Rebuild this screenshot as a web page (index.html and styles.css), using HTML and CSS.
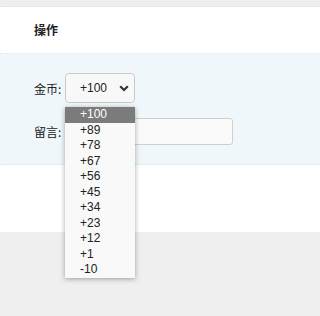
FILE: index.html
```html
<!DOCTYPE html>
<html lang="zh">
<head>
<meta charset="utf-8">
<title>操作</title>
<link rel="stylesheet" href="styles.css">
</head>
<body>
<div class="page">
  <div class="panel">
    <div class="strip"></div>
    <div class="head">操作</div>
    <div class="form">
      <div class="row">
        <span class="label">金币:</span>
        <div class="select-wrap">
          <div class="select">
            <span class="value">+100</span>
            <svg class="chev" width="10" height="7" viewBox="0 0 10 7"><path d="M1.2 1.3 L5 5 L8.8 1.3" fill="none" stroke="#333" stroke-width="2.2"/></svg>
          </div>
          <ul class="menu">
            <li class="on">+100</li>
            <li>+89</li>
            <li>+78</li>
            <li>+67</li>
            <li>+56</li>
            <li>+45</li>
            <li>+34</li>
            <li>+23</li>
            <li>+12</li>
            <li>+1</li>
            <li>-10</li>
          </ul>
        </div>
      </div>
      <div class="row">
        <span class="label">留言:</span>
        <input class="text" type="text">
      </div>
    </div>
    <div class="filler"></div>
  </div>
  <div class="rest"></div>
</div>
</body>
</html>
```

FILE: styles.css
```css
html, body {
  margin: 0;
  padding: 0;
  height: 316px;
}
body {
  background: #efefef;
  font-family: "Liberation Sans", "Noto Sans CJK SC", sans-serif;
  font-size: 12px;
  color: #222;
}
.page {
  height: 316px;
  display: flex;
  flex-direction: column;
}
.panel {
  background: #fff;
  position: relative;
  z-index: 1;
}
.rest {
  flex: 1;
  background: #efefef;
}
.strip {
  height: 6px;
  background: #eeeeee;
  border-bottom: 1px dotted #d6e4ee;
}
.head {
  height: 46px;
  line-height: 46px;
  padding-left: 34px;
  font-weight: bold;
  font-family: "Noto Sans CJK SC", sans-serif;
  color: #222;
  border-bottom: 1px dotted #d6e4ee;
}
.form {
  background: #f0f7fb;
  padding: 19px 0 19px 34px;
  display: flex;
  flex-direction: column;
  gap: 15px;
  border-bottom: 1px dotted #d6e4ee;
}
.row {
  display: flex;
  align-items: center;
}
.label {
  width: 31px;
  font-family: "Noto Sans CJK SC", sans-serif;
  color: #222;
}
.select-wrap {
  position: relative;
}
.select {
  box-sizing: border-box;
  width: 70px;
  height: 30px;
  border: 1px solid #c9c9c9;
  border-radius: 4px;
  background: #f8f8f8;
  display: flex;
  align-items: center;
  padding-left: 14px;
  padding-right: 5px;
}
.value {
  flex: 1;
  font-size: 12px;
  color: #222;
}
.chev {
  display: block;
  margin-top: 1px;
}
.menu {
  position: absolute;
  left: 0;
  top: 34px;
  width: 70px;
  margin: 0;
  padding: 0;
  list-style: none;
  background: #f9f9f9;
  box-shadow: 0 1px 5px rgba(0, 0, 0, 0.35);
  z-index: 5;
}
.menu li {
  height: 15.5px;
  line-height: 15.5px;
  padding-left: 15px;
  font-size: 12px;
  color: #222;
}
.menu li.on {
  background: #7b7b7b;
  color: #fff;
}
.text {
  box-sizing: border-box;
  width: 168px;
  height: 27px;
  margin: 0;
  border: 1px solid #cfcfcf;
  border-radius: 3px;
  background: #fafafa;
  padding: 0 6px;
  font: inherit;
}
.filler {
  height: 67px;
}
```
